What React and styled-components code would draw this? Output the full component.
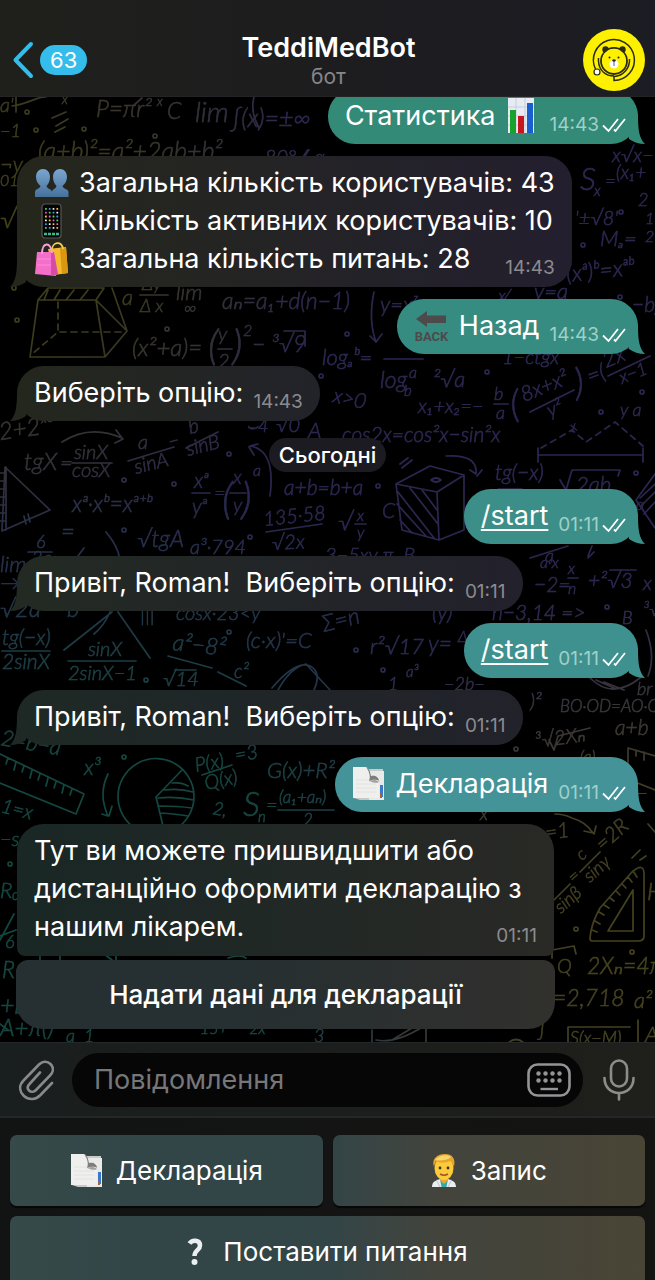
import React from "react";
import styled, { createGlobalStyle, css } from "styled-components";

const GlobalStyle = createGlobalStyle`
  *, *::before, *::after { box-sizing: border-box; }
  html, body { margin: 0; background: #000; }
  body, button, input { font-family: Inter, "Liberation Sans", sans-serif; }
  button { border: 0; padding: 0; background: none; color: inherit; cursor: pointer; }
`;

const Screen = styled.div`
  display: flex;
  flex-direction: column;
  height: 100vh;
  overflow: hidden;
  color: #fff;
  background: #000;
`;

/* ---------- header ---------- */

const Header = styled.header`
  flex: none;
  display: grid;
  grid-template-columns: 1fr auto 1fr;
  align-items: center;
  padding: 29px 10px 5px 12px;
  background: linear-gradient(90deg, #1f1f1b, #1d1d1f 50%, #1c1c24);
  border-bottom: 1px solid #242427;
`;

const BackButton = styled.button`
  display: flex;
  align-items: center;
  gap: 6px;
  justify-self: start;
`;

const UnreadBadge = styled.span`
  padding: 0 10px;
  border-radius: 15px;
  background: #34bdeb;
  color: #fff;
  font-size: 22px;
  line-height: 30px;
`;

const TitleBlock = styled.div`
  text-align: center;
`;

const Title = styled.h1`
  margin: 0;
  font-size: 27px;
  font-weight: 600;
  line-height: 34px;
`;

const Subtitle = styled.p`
  margin: 0;
  color: #87878a;
  font-size: 21px;
  line-height: 24px;
`;

const AvatarButton = styled.button`
  justify-self: end;
  height: 62px;
`;

/* ---------- chat ---------- */

const Chat = styled.main`
  position: relative;
  flex: 1;
  min-height: 0;
  overflow: hidden;
  display: flex;
  flex-direction: column;
  justify-content: flex-end;
  align-items: flex-start;
  gap: 12px;
  padding: 0 17px 13px;
`;

const Wallpaper = styled.svg`
  position: absolute;
  inset: 0;
  width: 100%;
  height: 100%;
`;

const Bubble = styled.article`
  position: relative;
  flex: none;
  display: ${(p) => (p.$multiline ? "grid" : "flex")};
  align-items: flex-end;
  gap: ${(p) => (p.$multiline ? "0" : "10px")};
  padding: 8px 17px 9px;
  border-radius: 27px;
  font-size: 27px;
  line-height: 38px;
  color: ${(p) => p.$from};
  background: linear-gradient(90deg, ${(p) => p.$from}, ${(p) => p.$to});
  ${(p) =>
    p.$out &&
    css`
      align-self: flex-end;
      padding-right: 12px;
    `}
  ${(p) =>
    p.$attached &&
    css`
      padding-bottom: 10px;
      border-radius: 27px 27px 8px 8px;
    `}
`;

const MessageText = styled.div`
  grid-area: 1 / 1;
  color: #fff;
  white-space: pre-wrap;
`;

const Line = styled.div`
  display: flex;
  align-items: center;
  gap: 10px;
`;

const Meta = styled.div`
  grid-area: 1 / 1;
  justify-self: end;
  display: flex;
  align-items: center;
  gap: 3px;
  color: ${(p) => (p.$out ? "#9fd0c9" : "#8b8b8e")};
  font-size: 19px;
  line-height: 20px;
`;

const Command = styled.a`
  color: #fff;
  text-decoration: underline;
  text-decoration-thickness: 2px;
  text-underline-offset: 4px;
`;

const Tail = styled.svg`
  position: absolute;
  bottom: 0;
  ${(p) => (p.$out ? "right: -7px;" : "left: -7px; transform: scaleX(-1);")}
`;

const DatePill = styled.div`
  position: relative;
  align-self: center;
  flex: none;
  margin: 5px 0;
  padding: 0 10px;
  border-radius: 17px;
  background: #1c1b21;
  font-size: 22px;
  font-weight: 500;
  line-height: 34px;
`;

const MessageGroup = styled.div`
  position: relative;
  flex: none;
  display: flex;
  flex-direction: column;
  gap: 4px;
  width: 537px;
  max-width: 100%;
`;

const InlineButton = styled.button`
  height: 69px;
  margin: 0 -1px;
  border-radius: 12px 12px 27px 27px;
  background: linear-gradient(90deg, #262f31, #262f31 40%, #31302d);
  color: #fff;
  font-size: 26px;
  font-weight: 500;
  line-height: 34px;
`;

/* ---------- composer ---------- */

const Composer = styled.form`
  flex: none;
  display: flex;
  align-items: center;
  padding: 10px 0 9px;
  border-top: 1px solid #242828;
  border-bottom: 2px solid #242727;
  background: linear-gradient(90deg, #191e1e, #1b1e1d 50%, #1f1f1b);
`;

const ToolButton = styled.button`
  display: flex;
  justify-content: center;
  width: 72px;
  height: 42px;
`;

const Field = styled.div`
  flex: 1;
  display: flex;
  align-items: center;
  height: 54px;
  padding: 0 12px 0 22px;
  border-radius: 27px;
  background: #060606;
`;

const MessageInput = styled.input`
  flex: 1;
  min-width: 0;
  border: 0;
  padding: 0;
  outline: 0;
  background: none;
  color: #fff;
  font-size: 27px;
  line-height: 38px;
  &::placeholder { color: #77777a; opacity: 1; }
`;

const KeyboardToggle = styled.button`
  height: 34px;
`;

/* ---------- reply keyboard ---------- */

const ReplyKeyboard = styled.nav`
  flex: none;
  display: grid;
  grid-template-columns: 1fr 1fr;
  grid-auto-rows: 71px;
  gap: 10px;
  height: 162px;
  overflow: hidden;
  padding: 17px 10px;
  background: linear-gradient(90deg, #121414, #141412);
`;

const ReplyKey = styled.button`
  display: flex;
  align-items: center;
  justify-content: center;
  gap: ${(p) => p.$gap || 12}px;
  grid-column: ${(p) => (p.$wide ? "1 / -1" : "auto")};
  border-radius: 7px;
  background: linear-gradient(90deg, #364a49, #324547 25%, #334547 50%, #42443d 66%, #4a4535) fixed;
  box-shadow: 0 2px 1px #060707;
  color: #fff;
  font-size: 26px;
  line-height: 34px;
`;

/* ---------- icons ---------- */

const Glyph = styled.svg`
  display: block;
  flex: none;
`;

const ChevronLeft = () => (
  <Glyph width="22" height="38" viewBox="0 0 22 38" aria-hidden="true">
    <path d="M19 3 3.500 19 19 35" fill="none" stroke="#34bdeb" strokeWidth="4" strokeLinecap="round" strokeLinejoin="round" />
  </Glyph>
);

const BearAvatar = () => (
  <Glyph width="62" height="62" viewBox="0 0 62 62" role="img" aria-label="TeddiMedBot">
    <circle cx="31" cy="31" r="31" fill="#fdf000" />
    <g fill="none" stroke="#2b2a12" strokeWidth="1.500">
      <path d="M12.500 40A20.500 20.500 0 1 1 31 51.500V47.500A16.500 16.500 0 0 0 46.500 30" />
      <path d="M15.500 29V32C16 42 23 47 31 47" />
      <circle cx="31" cy="32" r="13" strokeWidth="1.800" />
    </g>
    <circle cx="22.500" cy="20.500" r="3.200" fill="#2b2a12" />
    <circle cx="39.500" cy="20.500" r="3.200" fill="#2b2a12" />
    <circle cx="31" cy="31.500" r="11.800" fill="#fdf000" />
    <circle cx="31" cy="35" r="4.500" fill="#fff" />
    <ellipse cx="31" cy="31.500" rx="1.700" ry="1.200" fill="#222" />
    <path d="M31 32V37" stroke="#5757a8" strokeWidth="1" />
    <circle cx="26.500" cy="28.500" r="1" fill="#222" />
    <circle cx="35.500" cy="28.500" r="1" fill="#222" />
    <circle cx="14" cy="43" r="3" fill="#fff" stroke="#2b2a12" strokeWidth="1.200" />
  </Glyph>
);

const BubbleTail = ({ out }) => (
  <Tail $out={out} width="24" height="30" viewBox="0 0 24 30" aria-hidden="true">
    <path d="M6 6 17 0C17 16 18 24 24 30C18 30 12 28 8 25Z" fill="currentColor" />
  </Tail>
);

const ReadTicks = () => (
  <Glyph width="24" height="16" viewBox="0 0 24 16" aria-label="Прочитано" role="img">
    <path d="M1 8.500 6.500 14 16 2M12 12.500 13.500 14 23 2" fill="none" stroke="#fff" strokeWidth="1.800" />
  </Glyph>
);

const ChartIcon = () => (
  <Glyph width="34" height="36" viewBox="0 0 34 36" role="img" aria-label="Діаграма">
    <path d="M2 0H28V35H2Z" fill="#e6ebf4" />
    <path d="M2 9H28M2 18H28M2 27H28M10 0V35M19 0V35" stroke="#c5cedd" strokeWidth="1" />
    <path d="M4 12H10V35H4Z" fill="#17a32b" />
    <path d="M12 18H18V35H12Z" fill="#c4161c" />
    <path d="M21 5H27V35H21Z" fill="#1a5fd0" />
  </Glyph>
);

const PeopleIcon = () => (
  <Glyph width="35" height="34" viewBox="0 0 35 34" role="img" aria-label="Користувачі">
    <defs>
      <linearGradient id="people" x1="0" y1="0" x2="0" y2="1">
        <stop offset="0" stopColor="#7ba6cf" />
        <stop offset="1" stopColor="#46719d" />
      </linearGradient>
    </defs>
    <g fill="url(#people)">
      <path d="M9 3C13 3 16 6 16 11C16 15 14.500 18 12.500 20C13 23 18 23 18 26V31H1V26C1 23 6 23 6.500 20C4 18 2 15 2 11C2 6 5 3 9 3Z" />
      <path d="M26 3C30 3 33 6 33 11C33 15 31 18 28.500 20C29 23 34.500 23 34.500 26V31H18V26C18 23 22 23 22.500 20C20.500 18 19 15 19 11C19 6 22 3 26 3Z" />
    </g>
  </Glyph>
);

const appColours = ["#4fd860", "#f4f4f4", "#f05fb0", "#3f9bff", "#ffbf2f"];
const PhoneIcon = () => (
  <Glyph width="35" height="36" viewBox="0 0 35 36" role="img" aria-label="Телефон">
    <rect x="8" y="1" width="19" height="34" rx="3" fill="#050505" stroke="#565656" strokeWidth="1.200" />
    {[0, 1, 2, 3, 4, 5].map((row) =>
      [0, 1, 2, 3].map((col) => (
        <rect key={`${row}-${col}`} x={11 + col * 3.8} y={5 + row * 3.8} width="1.800" height="1.800" rx="0.500" fill={appColours[(row * 2 + col * 3) % 5]} />
      ))
    )}
    <path d="M10 31H25" stroke="#39b98b" strokeWidth="2.500" strokeDasharray="3 1" />
  </Glyph>
);

const BagsIcon = () => (
  <Glyph width="35" height="36" viewBox="0 0 35 36" role="img" aria-label="Покупки">
    <path d="M14 8 32 6 34 32 20 34Z" fill="#f4b92c" />
    <path d="M26 7 32 6 34 32 28 33Z" fill="#d99712" />
    <path d="M18 9C18 1 28 -1 29 8" fill="none" stroke="#f6cd45" strokeWidth="1.800" />
    <path d="M3 11H20L22 35 1 33Z" fill="#f36fca" />
    <path d="M17 11H20L24 33 17 35Z" fill="#d84aa8" />
    <path d="M8 13C8 1 17 0 18 12" fill="none" stroke="#f5a1dc" strokeWidth="1.800" />
    <path d="M3 18H17M3 24H17" stroke="#fa8fd9" strokeWidth="1" />
  </Glyph>
);

const BackArrowIcon = () => (
  <Glyph width="35" height="34" viewBox="0 0 35 34" role="img" aria-label="Назад">
    <path d="M2 10 13 2V6.500H32V14H13V18Z" fill="#4d4a4b" />
    <text x="17.500" y="32" textAnchor="middle" fill="#4d4a4b" fontFamily="'Liberation Sans Narrow', Roboto, sans-serif" fontWeight="700" fontSize="13">BACK</text>
  </Glyph>
);

const TabsIcon = () => (
  <Glyph width="34" height="34" viewBox="0 0 34 34" role="img" aria-label="Документ">
    <path d="M4 2H31V33H8L2 31Z" fill="#c9c9c7" />
    <path d="M17 4H32V33H17Z" fill="#e9e9e8" />
    <path d="M28 18H31V30H28Z" fill="#3c77c9" />
    <path d="M28 27H30V31H28Z" fill="#b5622e" />
    <path d="M1 0H14C17 1 18 5 19 9H27V31H1Z" fill="#efefee" />
    <path d="M4 13H24M4 17H24M4 21H24M4 25H24" stroke="#e2e2e0" strokeWidth="1" />
    <path d="M14 0C18 2 18 5 19 9C23 8 27 10 27 14C24 12 20 13 17 14C19 9 17 4 14 0Z" fill="#7d7d7b" />
    <path d="M17 14C20 13 24 12 27 15C24 17 20 15 17 14Z" fill="#a3a3a1" />
  </Glyph>
);

const DoctorIcon = () => (
  <Glyph width="26" height="34" viewBox="0 0 26 34" role="img" aria-label="Лікар">
    <path d="M1 33C1 27 6 26 9 25H17C20 26 25 27 25 33Z" fill="#e9edf1" />
    <path d="M9 25H17L15.500 33H10.500Z" fill="#3aa6a6" />
    <path d="M9 22H17V26L13 30 9 26Z" fill="#e9a92b" />
    <ellipse cx="13" cy="14" rx="9.500" ry="12" fill="#fccb3c" />
    <path d="M3 13C0 4 7 0 14 0C21 0 25 4 23 13C22 10 21 8 19 7C14 9 8 9 5 7C4 9 3.500 11 3 13Z" fill="#e8a52c" />
    <path d="M4 6C8 1 16 0 20 3C15 7 9 7 4 6Z" fill="#f9d668" />
    <circle cx="9" cy="14" r="1.400" fill="#43301a" />
    <circle cx="17" cy="14" r="1.400" fill="#43301a" />
    <path d="M9 20Q13 22.500 17 20" fill="none" stroke="#a6532a" strokeWidth="1.500" />
    <path d="M6 27 9 33M20 27 17 33" stroke="#bcc4cb" strokeWidth="1" />
  </Glyph>
);

const QuestionIcon = () => (
  <Glyph width="16" height="28" viewBox="0 0 16 28" role="img" aria-label="Питання">
    <path d="M2.500 5.500C5 1.500 13 1.500 13 7.500C13 12.500 7.500 12 7.500 18" fill="none" stroke="#eceef2" strokeWidth="4.500" />
    <circle cx="7.500" cy="24" r="3" fill="#eceef2" />
  </Glyph>
);

const ClipIcon = () => (
  <Glyph width="36" height="42" viewBox="0 0 36 42" aria-hidden="true">
    <path d="M34 24 22 36.500C18 40.500 11 41.500 6 37C1 32 1 26 5.500 21.500L21 5.500C24 2.500 29 1.500 32.500 5C36 8.500 35.500 13 32 16.500L18 31C16 33 13 33.500 11 31.500C9 29.500 9.500 27 11.500 25L22 13.500" fill="none" stroke="#88898a" strokeWidth="2.600" strokeLinecap="round" />
  </Glyph>
);

const MicIcon = () => (
  <Glyph width="34" height="42" viewBox="0 0 34 42" aria-hidden="true">
    <g fill="none" stroke="#8d8c8a" strokeWidth="2.600" strokeLinecap="round">
      <rect x="9" y="1.500" width="16" height="26" rx="8" />
      <path d="M2.500 19C2.500 39 31.500 39 31.500 19M17 34V40.500" />
    </g>
  </Glyph>
);

const KeyboardIcon = () => (
  <Glyph width="44" height="34" viewBox="0 0 44 34" aria-hidden="true">
    <rect x="1.500" y="1.500" width="41" height="31" rx="9" fill="none" stroke="#949396" strokeWidth="2.600" />
    {[11.5, 18.5, 25.5, 32.5].map((x) => (
      <g key={x} fill="#949396">
        <circle cx={x} cy="10.500" r="2.200" />
        <circle cx={x} cy="17.500" r="2.200" />
      </g>
    ))}
    <path d="M13.500 26H31" stroke="#949396" strokeWidth="2.400" />
  </Glyph>
);

/* ---------- wallpaper: hand-written maths notes ---------- */

// x, baseline y, font size, text, rotation in degrees
const notes = [
  [0, 112, 20, "a'"], [96, 117, 24, "P=πr²"], [62, 104, 13, "x"], [157, 106, 13, "x"], [167, 119, 23, "C"],
  [195, 122, 28, "lim"], [231, 127, 25, "∫(x)=±∞"], [0, 137, 18, "−1"],
  [38, 160, 25, "(a+b)²=a²+2ab+b²"], [250, 164, 20, "·  80°∠α"], [0, 172, 22, "¬y"], [0, 186, 16, "01"],
  [0, 228, 26, "√"], [122, 305, 22, "a"], [142, 290, 18, "Δy"], [140, 312, 18, "Δ x"], [176, 300, 22, "lim"],
  [184, 314, 18, "∞"], [222, 309, 23, "aₙ=a₁+d(n−1)"], [132, 356, 24, "(x²+a)="], [218, 341, 20, "y"],
  [218, 368, 20, "2"], [208, 360, 42, "("], [232, 360, 42, ")"], [243, 336, 16, "2"], [252, 352, 23, "− ³√9"],
  [380, 312, 22, "y=xᶻ"], [322, 365, 22, "logₐᵇ="], [380, 388, 23, "log"], [404, 396, 15, "b"], [409, 378, 16, "a"],
  [433, 387, 22, "²√a"], [332, 402, 21, "x>0", 12], [418, 413, 20, "x₁+x₂=−"], [494, 400, 18, "b"], [496, 419, 18, "a"],
  [512, 418, 38, "(", -8], [524, 402, 21, "8x+x²", -22], [550, 417, 19, "y²", -22], [576, 396, 38, ")", -8],
  [590, 384, 22, "=(", -20], [606, 368, 22, "2x²", -22], [622, 384, 18, "x−1", -22],
  [342, 442, 21, "cos2x=cos²x−sin²x"], [580, 190, 32, "S"], [594, 196, 15, "x"], [605, 188, 19, "="],
  [616, 179, 19, "(x₁+"], [612, 162, 20, "x√x−"], [638, 206, 18, "2"], [575, 225, 20, "'±√8'"],
  [600, 246, 22, "Mₐ="], [645, 224, 16, "1"], [645, 242, 16, "2"], [567, 282, 23, "(xᵃ)ᵇ=xᵃᵇ", -6],
  [534, 299, 22, "y=a"], [498, 302, 18, "x⁄ₓ"], [632, 312, 21, "−b)"], [502, 364, 20, "1−ctgx"],
  [0, 440, 24, "2+2ˣ⁰", -8], [24, 470, 24, "tgX"], [60, 470, 22, "="], [74, 459, 20, "sinX"], [72, 477, 20, "cosX"],
  [138, 449, 20, "a"], [136, 474, 20, "sinA", -14], [190, 434, 20, "b", -14], [188, 456, 20, "sinB", -14],
  [170, 448, 18, "−", -14], [308, 438, 22, "A"], [276, 432, 20, "√0"], [246, 432, 18, "⌣4"],
  [72, 512, 23, "xᵃ·xᵇ=xᵃ⁺ᵇ"], [194, 488, 21, "xᵃ"], [192, 514, 21, "yᵃ"], [214, 500, 20, "="],
  [222, 514, 43, "("], [233, 484, 20, "x"], [233, 512, 20, "y"], [241, 514, 43, ")"], [253, 476, 16, "a"],
  [284, 495, 21, "a+b=b+a"], [264, 526, 20, "135·58", -6], [272, 550, 20, "√2x", -3], [338, 530, 24, "√"],
  [357, 521, 16, "x"], [357, 538, 16, "y"], [382, 518, 21, "C"], [137, 547, 23, "√tgA"], [190, 554, 20, "a³·794"],
  [36, 548, 18, "6"], [32, 564, 18, "2a"], [0, 572, 22, "lim"], [0, 590, 20, "→1"], [61, 540, 24, "="],
  [325, 562, 20, "3−5xy π  B"], [540, 568, 16, "a·x"], [495, 480, 21, "tg(−x)"], [576, 492, 22, "2ab"],
  [534, 592, 21, "−2="], [568, 574, 16, "x"], [568, 594, 16, "n"], [588, 588, 21, "+²√3"], [643, 590, 20, "x"],
  [492, 620, 21, "n−3,14 =>"], [622, 624, 18, "B"], [643, 616, 18, "³√"], [545, 562, 18, "a"],
  [0, 617, 24, "√2a − b"], [176, 620, 20, "cosx·23<y"], [432, 620, 22, "(y)"], [140, 622, 20, "|||"],
  [2, 645, 21, "tg(−x)"], [2, 669, 21, "2sinX"], [88, 656, 20, "sinX"], [68, 680, 20, "2sinX−1"],
  [172, 650, 23, "a²−8²", 6], [246, 648, 22, "(c·x)'=C"], [234, 678, 19, "c²"], [163, 686, 20, "√14"],
  [324, 632, 23, "Σ=n", -14], [370, 654, 22, "r²√17"], [428, 652, 23, "y="], [458, 642, 16, "Δ"],
  [388, 690, 18, "1"], [444, 690, 18, "−2b−"], [406, 677, 15, "a³"], [530, 708, 20, ")²"], [560, 712, 17, "BO·OD=AO·OC"],
  [615, 735, 21, "a+b"], [637, 695, 18, "br"], [536, 748, 20, "³√2Xₙ", -8], [580, 762, 16, "(a)"],
  [0, 745, 22, "2=b−a", 10], [84, 775, 22, "x³"], [0, 812, 20, "1=x", 14], [196, 772, 20, "P(x)", -10],
  [206, 790, 20, "Q(x)", -12], [236, 762, 20, "=3", -10], [267, 778, 22, "G(x)+R²"], [212, 814, 18, "2,", 10],
  [243, 816, 34, "S"], [258, 822, 15, "n"], [266, 812, 20, "="], [279, 803, 17, "(a₁+aₙ)"], [303, 826, 17, "2"],
  [480, 820, 18, "xⁿ"], [546, 840, 21, "=1", -8], [628, 800, 20, "z−"], [0, 846, 20, "−s"], [0, 898, 22, "R₀"],
  [5, 948, 18, "6"], [2, 978, 23, "R"], [0, 1014, 25, "+b"], [0, 1036, 24, "A+π()"], [590, 883, 18, "sinγ", -42],
  [582, 861, 17, "c", -42], [603, 852, 21, "=2R", -42], [561, 914, 18, "sinβ", -42], [574, 884, 18, "=", -42],
  [557, 973, 20, "Q"], [587, 974, 23, "2Xₙ=4π"], [553, 1006, 23, "=2,718"], [634, 1008, 22, "a²"],
  [570, 1044, 18, "S(x−M)"], [645, 1042, 22, "A"], [647, 900, 24, "H"],
  [66, 1042, 18, "a  1"], [200, 1034, 16, "15+  − 2x"], [314, 1042, 18, "3"], [538, 1036, 20, "∫"],
  [636, 510, 16, "α"], [572, 432, 14, "x", -20], [620, 416, 18, "y a"],
];

const sketches = [
  "M12 106C28 104 38 96 46 97M16 112V97", "M52 118 66 112M56 126 68 119M55 132 65 127M134 105 142 98", "M254 97Q250 112 259 128",
  "M38 300 96 300 127 331 105 357 30 357ZM96 300 105 357M96 300 104 288H48L38 300M112 288 127 331M48 290 44 300M60 290 54 300M74 290 66 300M88 290 80 300",
  "M140 295H168M218 349H232M284 331H305V346", "M374 292Q368 320 376 342L370 336M376 342 382 334", "M384 359H423M494 404H508M530 412 574 390M608 376 650 356",
  "M538 455H643M538 448V462M643 448V462", "M62 442Q90 424 122 438L116 430M123 439 115 443", "M72 463H112M128 461 174 447M186 448 218 432M192 493H210M230 493H246",
  "M5 467 50 510 2 531ZM6 467V530M0 473H5M0 481H5M0 489H5M0 497H5M0 505H5M0 513H5M0 521H5", "M24 516 26 524M28 514 30 522",
  "M250 446Q276 450 270 496M250 446 258 444M249 447 254 455", "M266 532 322 524M28 552H52M106 532Q118 546 120 560M78 556 84 548",
  "M396 484 430 466 464 475V530L439 540 402 530ZM396 484 437 492 464 475M437 492 439 540M398 492 434 538M397 504 426 536M400 520 412 533M410 488 438 524M422 490 437 510M431 480Q436 476 441 480Q436 484 431 480",
  "M446 456Q478 454 476 474L470 470M477 476 482 470M400 464 408 458M402 468 412 460M355 524H366M498 489H522M560 480 566 490 572 470H620L618 476",
  "M655 474 636 500 655 528M640 498 655 484M641 506 655 492M644 514 655 502M530 558 568 546M592 546 588 556M588 558 594 552",
  "M568 578H578M610 570H636M112 612 64 650M118 612 150 658M110 612Q104 626 94 634M2 651H50M68 661H136M168 656 212 668M218 672 246 686M175 670H196",
  "M272 688Q296 660 310 666Q322 672 314 690M278 690Q290 668 306 664L330 690",
  "M590 678Q612 700 640 678M596 680 614 688M646 630Q656 656 648 676M604 682 624 690",
  "M0 754 84 794 76 814 0 783M8 758 6 764M16 762 14 770M24 766 22 772M32 770 30 778M40 774 38 780M48 778 46 786M56 782 54 788M64 785 62 793M72 789 70 795",
  "M118 796A38 38 0 1 1 118 797M156 797 182 770M156 797 163 826M172 783Q182 782 188 786M164 790Q180 788 193 792M158 798Q176 796 194 800M159 806Q178 806 192 808M160 813Q176 814 188 816",
  "M108 774Q98 794 108 816L102 814M109 816 112 806", "M202 775 232 765M278 810H334", "M555 814Q564 814 572 818 586 822 593 833L584 831M594 834 596 826",
  "M628 770V748L655 756M636 750V756M644 752V760M549 740 554 750 558 736 590 728",
  "M590 938Q591 924 600 908L632 872Q644 862 644 874V936Q644 941 638 941H592Q590 941 590 938ZM608 931 633 890V931ZM592 930 597 932M595 921 600 924M599 912 604 915M604 905 609 908M610 898 614 901M616 891 620 895M622 884 626 888M628 877 632 882M633 871 637 877",
  "M580 872 600 852M554 900 570 884M632 858 640 850M640 860 646 856M552 958V950L574 946 576 954M568 1043V1027H630M655 790 630 780M0 940 14 914M0 936 16 930M372 1043V1030M376 1040Q396 1044 424 1026M426 1026V1043M392 1040 412 1028",
  "M638 1020V1043M508 1043Q516 1036 524 1043M655 832 648 824M0 1024 8 1030M40 954V960M60 954V960M104 954 112 960M116 954V960M228 958Q240 954 246 958",
];

const rings = [
  [27, 112], [36, 130], [84, 129], [155, 136], [14, 288], [17, 320], [167, 329], [321, 376], [124, 480], [174, 484],
  [229, 454], [124, 530], [250, 537], [347, 334], [487, 372], [378, 486], [583, 245], [621, 212], [620, 297],
  [124, 757], [10, 864], [576, 929], [632, 952], [636, 473], [607, 607], [229, 632], [146, 680], [356, 650], [383, 670], [516, 749],
  [642, 392], [601, 412],
];

const ChatWallpaper = () => (
  <Wallpaper viewBox="0 97 655 945" preserveAspectRatio="xMidYMax slice" aria-hidden="true">
    <defs>
      <radialGradient id="olive" gradientUnits="userSpaceOnUse" cx="0" cy="240" r="330">
        <stop offset="0" stopColor="#444216" />
        <stop offset="0.400" stopColor="#3b3a1e" />
        <stop offset="1" stopColor="#3b3a24" stopOpacity="0" />
      </radialGradient>
      <radialGradient id="teal" gradientUnits="userSpaceOnUse" cx="90" cy="900" r="440">
        <stop offset="0" stopColor="#0d4a40" />
        <stop offset="0.450" stopColor="#164540" />
        <stop offset="1" stopColor="#1d3f48" stopOpacity="0" />
      </radialGradient>
      <radialGradient id="sand" gradientUnits="userSpaceOnUse" cx="655" cy="960" r="380">
        <stop offset="0" stopColor="#47431b" />
        <stop offset="0.500" stopColor="#403d26" />
        <stop offset="1" stopColor="#403d35" stopOpacity="0" />
      </radialGradient>
      <mask id="ink" maskUnits="userSpaceOnUse" x="0" y="97" width="655" height="945">
        <g fill="#fff" stroke="#fff" strokeWidth="0.500" fontFamily="Lato, 'DejaVu Sans', sans-serif" fontStyle="italic" fontWeight="300">
          {notes.map(([x, y, size, text, angle = 0], i) => (
            <text key={i} x={x} y={y} fontSize={size} transform={`rotate(${angle} ${x} ${y})`} xmlSpace="preserve">{text}</text>
          ))}
        </g>
        <g fill="none" stroke="#fff" strokeWidth="1.700" strokeLinecap="round" strokeLinejoin="round">
          {sketches.map((d) => <path key={d} d={d} />)}
          <path d="M58 302V332L31 355M60 332H125M541 448 572 430 586 442 615 422 643 446" strokeDasharray="6 5" />
          {rings.map(([cx, cy]) => <circle key={`${cx}-${cy}`} cx={cx} cy={cy} r="2" />)}
        </g>
      </mask>
    </defs>
    <g mask="url(#ink)">
      <rect y="97" width="655" height="945" fill="#2b2650" />
      <rect y="97" width="655" height="945" fill="url(#olive)" />
      <rect y="97" width="655" height="945" fill="url(#teal)" />
      <rect y="97" width="655" height="945" fill="url(#sand)" />
    </g>
  </Wallpaper>
);

/* ---------- messages ---------- */

const Incoming = ({ children, time, from, to, multiline, attached }) => (
  <Bubble $from={from} $to={to} $multiline={multiline} $attached={attached}>
    {!attached && <BubbleTail />}
    <MessageText>{children}</MessageText>
    <Meta><time>{time}</time></Meta>
  </Bubble>
);

const Outgoing = ({ children, time, colour }) => (
  <Bubble $out $from={colour} $to={colour}>
    <BubbleTail out />
    <MessageText>{children}</MessageText>
    <Meta $out><time>{time}</time><ReadTicks /></Meta>
  </Bubble>
);

export default function App() {
  return (
    <Screen>
      <GlobalStyle />
      <Header>
        <BackButton type="button" aria-label="Назад до чатів, 63 непрочитані">
          <ChevronLeft />
          <UnreadBadge>63</UnreadBadge>
        </BackButton>
        <TitleBlock>
          <Title>TeddiMedBot</Title>
          <Subtitle>бот</Subtitle>
        </TitleBlock>
        <AvatarButton type="button"><BearAvatar /></AvatarButton>
      </Header>

      <Chat>
        <ChatWallpaper />
        <Outgoing time="14:43" colour="#328a77"><Line>Статистика<ChartIcon /></Line></Outgoing>
        <Incoming time="14:43" from="#25271c" to="#231f2f" multiline>
          <Line><PeopleIcon />Загальна кількість користувачів: 43</Line>
          <Line><PhoneIcon />Кількість активних користувачів: 10</Line>
          <Line><BagsIcon />Загальна кількість питань: 28</Line>
        </Incoming>
        <Outgoing time="14:43" colour="#368c80"><Line><BackArrowIcon />Назад</Line></Outgoing>
        <Incoming time="14:43" from="#24271d" to="#22232a">Виберіть опцію:</Incoming>
        <DatePill>Сьогодні</DatePill>
        <Outgoing time="01:11" colour="#3b8f88"><Command href="#start">/start</Command></Outgoing>
        <Incoming time="01:11" from="#232a23" to="#22212c">{"Привіт, Roman!  Виберіть опцію:"}</Incoming>
        <Outgoing time="01:11" colour="#3f918f"><Command href="#start">/start</Command></Outgoing>
        <Incoming time="01:11" from="#1e2925" to="#22222b">{"Привіт, Roman!  Виберіть опцію:"}</Incoming>
        <Outgoing time="01:11" colour="#439399"><Line><TabsIcon />Декларація</Line></Outgoing>
        <MessageGroup>
          <Incoming time="01:11" from="#192725" to="#292925" multiline attached>
            <Line>Тут ви можете пришвидшити або</Line>
            <Line>дистанційно оформити декларацію з</Line>
            <Line>нашим лікарем.</Line>
          </Incoming>
          <InlineButton type="button">Надати дані для декларації</InlineButton>
        </MessageGroup>
      </Chat>

      <Composer>
        <ToolButton type="button" aria-label="Прикріпити файл"><ClipIcon /></ToolButton>
        <Field>
          <MessageInput type="text" aria-label="Повідомлення" placeholder="Повідомлення" />
          <KeyboardToggle type="button" aria-label="Клавіатура бота"><KeyboardIcon /></KeyboardToggle>
        </Field>
        <ToolButton type="button" aria-label="Голосове повідомлення"><MicIcon /></ToolButton>
      </Composer>

      <ReplyKeyboard aria-label="Команди бота">
        <ReplyKey type="button"><TabsIcon />Декларація</ReplyKey>
        <ReplyKey type="button" $gap={14}><DoctorIcon />Запис</ReplyKey>
        <ReplyKey type="button" $wide $gap={20}><QuestionIcon />Поставити питання</ReplyKey>
      </ReplyKeyboard>
    </Screen>
  );
}
